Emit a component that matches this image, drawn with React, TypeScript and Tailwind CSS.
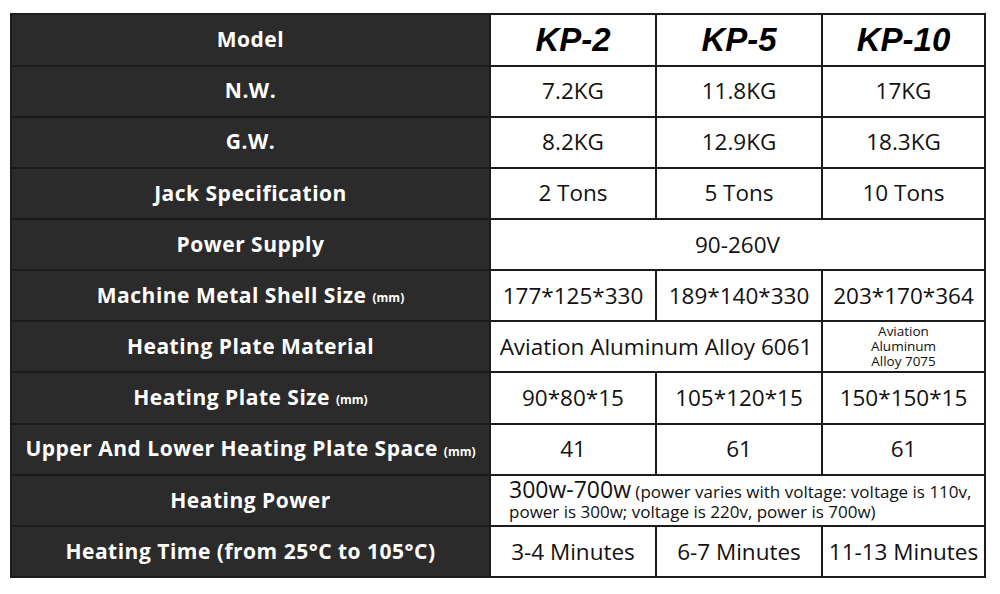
const font = { fontFamily: "'Open Sans', Lato, sans-serif" };
const modelFont = { fontFamily: "'Liberation Sans', Arial, sans-serif" };

const Label = ({ children }: { children: React.ReactNode }) => (
  <div className="flex items-center justify-center bg-[#2b2b2b] text-[21px] font-bold tracking-[0.5px] text-white">
    {children}
  </div>
);

const Cell = ({ children, className = "" }: { children: React.ReactNode; className?: string }) => (
  <div className={`flex items-center justify-center bg-white text-[22.5px] text-[#111] ${className}`}>
    {children}
  </div>
);

const Mm = () => <span className="ml-[6px] mt-[5px] text-[12px] font-bold tracking-normal">(mm)</span>;

export default function App() {
  const model = "flex items-center justify-center bg-white text-[33px] font-bold italic text-black";
  return (
    <div className="h-[594px] w-[1000px] bg-white pl-[10px] pt-[13px]" style={font}>
      <div className="grid h-[565px] w-[976px] grid-cols-[477px_164px_164px_1fr] grid-rows-[repeat(11,1fr)] gap-[2px] border-2 border-[#1c1c1c] bg-[#1c1c1c]">
        <Label>Model</Label>
        <div className={model} style={modelFont}>KP-2</div>
        <div className={model} style={modelFont}>KP-5</div>
        <div className={model} style={modelFont}>KP-10</div>

        <Label>N.W.</Label>
        <Cell>7.2KG</Cell>
        <Cell>11.8KG</Cell>
        <Cell>17KG</Cell>

        <Label>G.W.</Label>
        <Cell>8.2KG</Cell>
        <Cell>12.9KG</Cell>
        <Cell>18.3KG</Cell>

        <Label>Jack Specification</Label>
        <Cell>2 Tons</Cell>
        <Cell>5 Tons</Cell>
        <Cell>10 Tons</Cell>

        <Label>Power Supply</Label>
        <Cell className="col-span-3">90-260V</Cell>

        <Label>
          Machine Metal Shell Size <Mm />
        </Label>
        <Cell>177*125*330</Cell>
        <Cell>189*140*330</Cell>
        <Cell>203*170*364</Cell>

        <Label>Heating Plate Material</Label>
        <Cell className="col-span-2">Aviation Aluminum Alloy 6061</Cell>
        <Cell className="flex-col !text-[13.5px] leading-[15px]">
          <span>Aviation</span>
          <span>Aluminum</span>
          <span>Alloy 7075</span>
        </Cell>

        <Label>
          Heating Plate Size <Mm />
        </Label>
        <Cell>90*80*15</Cell>
        <Cell>105*120*15</Cell>
        <Cell>150*150*15</Cell>

        <Label>
          Upper And Lower Heating Plate Space <Mm />
        </Label>
        <Cell>41</Cell>
        <Cell>61</Cell>
        <Cell>61</Cell>

        <Label>Heating Power</Label>
        <div className="col-span-3 flex items-center bg-white pl-[18px] pr-2 text-[17px] leading-[20px] text-[#111]">
          <p>
            <span className="inline-block text-[23px] leading-[20px]">300w-700w</span> (power varies with voltage: voltage is 110v,
            <br />
            power is 300w; voltage is 220v, power is 700w)
          </p>
        </div>

        <Label>Heating Time (from 25°C to 105°C)</Label>
        <Cell>3-4 Minutes</Cell>
        <Cell>6-7 Minutes</Cell>
        <Cell>11-13 Minutes</Cell>
      </div>
    </div>
  );
}
